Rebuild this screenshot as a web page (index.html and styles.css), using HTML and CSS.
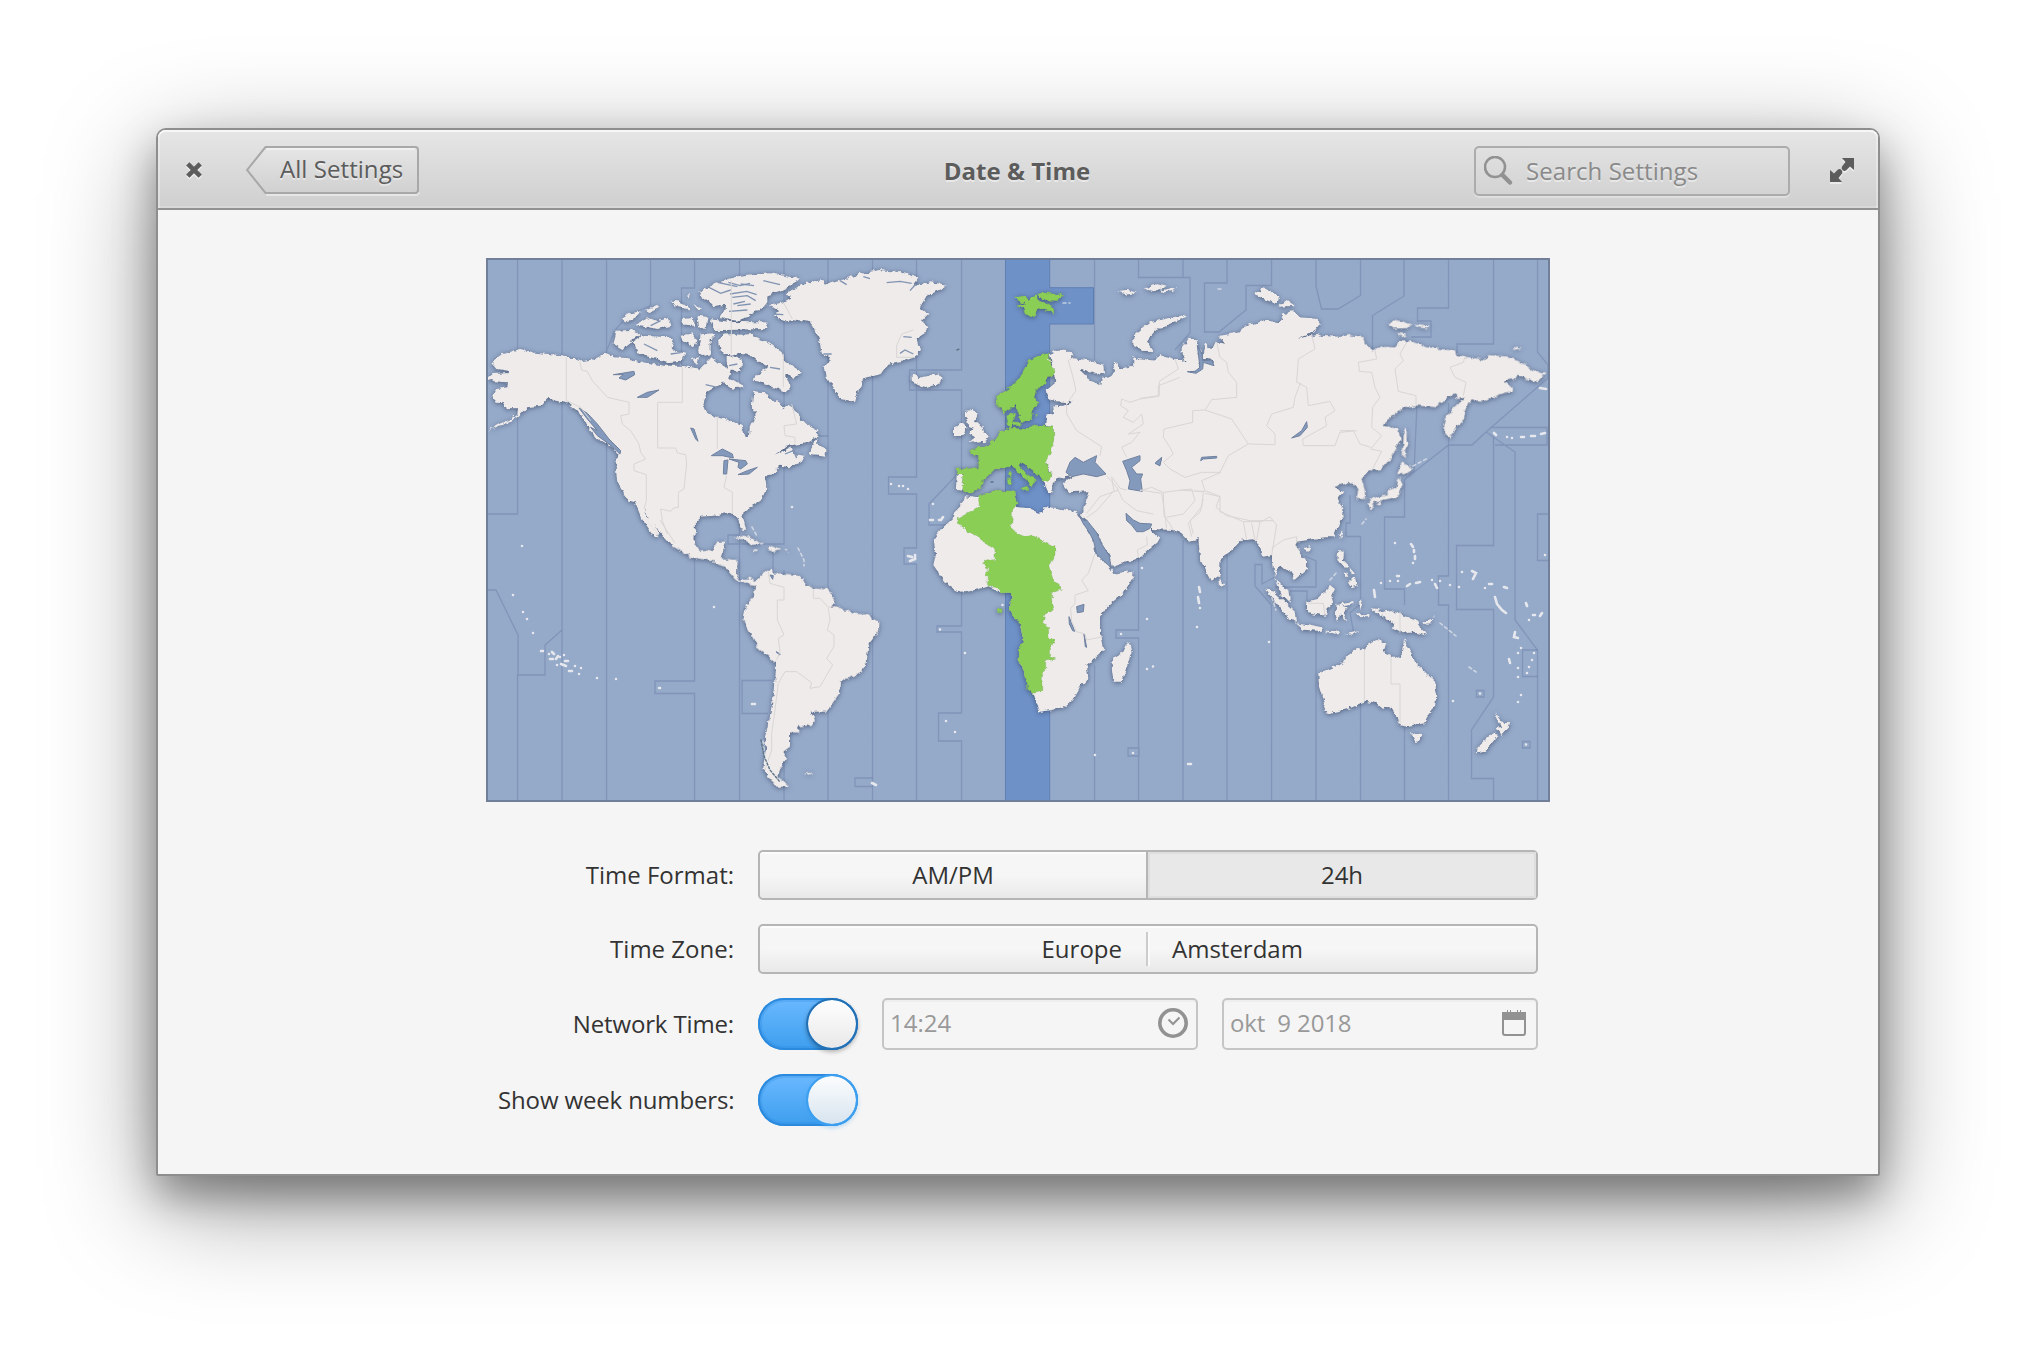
FILE: index.html
```html
<!DOCTYPE html>
<html lang="en">
<head>
<meta charset="utf-8">
<title>Date &amp; Time</title>
<link rel="stylesheet" href="styles.css">
</head>
<body>
<main class="window">
  <header class="headerbar">
    <svg class="close" width="16" height="16" viewBox="0 0 16 16"><path d="M1.800 1.800 14.200 14.200M14.200 1.800 1.800 14.200"/></svg>
    <div class="back">
      <svg class="back-shape" width="174" height="50" viewBox="0 0 174 50">
        <defs><linearGradient id="backFill" x1="0" y1="0" x2="0" y2="1"><stop offset="0" stop-color="#e6e6e6"/><stop offset="1" stop-color="#d0d0d0"/></linearGradient></defs>
        <path d="M20 49H169Q173 49 173 46" fill="none" stroke="#e6e6e6" stroke-width="2"/>
        <path d="M19.500 1H169Q172 1 172 4V44Q172 47 169 47H19.500L1 24Z" fill="url(#backFill)" stroke="#a8a8a8" stroke-width="2"/>
        <path d="M21 3H169" stroke="#f0f0f0" stroke-width="2"/>
      </svg>
      <span>All Settings</span>
    </div>
    <h1>Date &amp; Time</h1>
    <div class="search">
      <svg width="30" height="30" viewBox="0 0 30 30"><circle cx="11" cy="11" r="10"/><path class="handle" d="M18.500 19 26 26.500"/></svg>
      <span>Search Settings</span>
    </div>
    <svg class="expand" width="24" height="24" viewBox="0 0 24 24"><path d="M12 0H24V12L20 8.500 16 12.500Q14 13.500 12.500 12 11 10.500 12 8.500L15.500 4ZM0 12 4 15.500 8 11.500Q10 10.500 11.500 12 13 13.500 12 15.500L8.500 20 12 24H0Z"/></svg>
  </header>

  <section class="content">
    <svg class="map" width="1064" height="544" viewBox="486 258 1064 544">
      <defs>
        <filter id="coast" x="486" y="258" width="1064" height="544" filterUnits="userSpaceOnUse" color-interpolation-filters="sRGB">
          <feTurbulence type="fractalNoise" baseFrequency=".17" numOctaves="3" seed="4" result="noise"/>
          <feDisplacementMap in="SourceGraphic" in2="noise" scale="5.5" xChannelSelector="R" yChannelSelector="G" result="land"/>
          <feDropShadow in="land" dx="0" dy="1" stdDeviation="2.6" flood-color="#33415e" flood-opacity=".7"/>
        </filter>
      </defs>
      <rect x="486" y="258" width="1064" height="544" fill="#95a9c9"/>
      <path class="zone" d="M1005.500 258H1049.700V287.700H1093.500V324H1049.700V520L1049.700 802H1005.500Z"/>

      <g class="lines">
        <path d="M517.500 258V514H486M517.500 675V802M562 258V802M606.500 258V802M650.500 258V306Q626 314 614 332L607 350M694.500 258V288H681.500V369M739.500 258V802M784 258V544H728V535H740M784 570V802M828 258V802M872.500 258V802M916.500 258V477H888.500V494H916.500V548H904V564H916.500V802M961.500 258V370H909.500V390H961.500V470L929 504V525H961.500V626H937V632H961.500V713H938.500V741H961.500V802"/>
        <path d="M1094.500 258V360M1138.500 258V277.500H1190V333L1175 350M1183 258V277.500M1227 258V283H1204.500V332H1219L1246 310V285.500H1271.500V258M1316 258V286L1321.500 309H1338L1360.500 295.500V258M1404 258V296L1372.500 315.500V350M1448.500 258V308H1417.500V321H1431V337H1411M1493.500 258V344H1457V356M1537.500 258V352L1548 365V378L1486 432 1472 445H1448.500V403M1486 432 1515 452V620L1537.500 650V802M1490 427.500H1547V445H1495"/>
        <path d="M1417 404 1414 471 1404.500 480V517H1384.500V589H1404.500V605M1448.500 445 1404 480M1448.500 445V576H1438.500V605H1448.500V802M1493.500 437V545.500H1456.500V609.500H1493.500V697L1471.500 730V778.500H1493.500V802M1550 514H1537.500V560.500H1550M1537.500 650H1522.500V676.500H1537.500M1094.500 665V802M1138.500 520V630H1116V638H1138.500V802M1183 540V802M1227 535V802M1271.500 605 1255 586V564.500H1262V584L1275 577M1271.500 605V802M1316 626V802M1360.500 536V604L1350 613 1354 634M1360.500 700V802M1404.500 725V802M1346 536.500V523H1350V495M1346 536.500H1360.500M1305 556 1316 561V587H1275M1290 591H1307V611M1476.500 690.500H1484V697H1476.500ZM1522.500 741.500H1530V748H1522.500ZM1128 748H1139V756H1128Z"/>
        <path d="M694.500 520V681H655V693.500H694.500V802M772 680.500H742V713.500H768M872.500 778H855V786.500H872.500M828 436H815M486 590H496L518 635V675H545V645L562 630M773 552V570"/>
      </g>

      <g filter="url(#coast)">
        <g class="land">
          <!-- North America, west -->
          <g transform="translate(484 254) scale(.33333)">
            <path d="M12 372 26 360 75 357 72 350 40 345 22 325 55 300 110 285 150 296 235 304 290 322 330 316 365 298 390 310 430 312 480 325 540 335 595 335 650 345 665 330 682 310 700 325 735 345 730 375 700 395 668 415 658 450 665 470 690 487 740 500 768 512 770 540 790 555 800 540 800 515 830 505 850 700 830 740 780 770 775 790 785 825 770 822 755 785 725 778 690 785 650 788 632 805 630 870 560 870 500 805 480 765 490 795 524 850 512 848 470 790 452 745 430 738 400 685 395 640 400 600 385 580 340 555 310 520 285 470 255 450 215 440 190 432 170 455 130 460 100 490 60 510 10 530 50 508 85 492 100 480 102 463 65 462 60 445 35 443 25 425 40 405 70 400 72 385 30 382Z"/>
            <path d="M395 230 440 228 470 240 440 265 415 285 385 268ZM475 245 555 250 570 262 560 285 605 300 590 320 550 325 500 310 460 300 465 285 440 268ZM412 195 440 178 470 172 455 190 430 205ZM455 210 490 190 520 202 555 192 562 215 520 225ZM485 168 520 152 525 162 500 174ZM560 140 582 142 612 155 616 166 580 160ZM588 195 630 192 632 215 600 215ZM628 150 655 165 640 165ZM590 245 625 238 640 260 630 278 595 260ZM650 240 695 238 680 260 680 300 660 305 642 295ZM640 185 670 188 665 225 645 220ZM678 195 740 205 790 205 850 205 850 225 690 228ZM645 110 680 98 690 88 730 78 770 65 810 60 850 60 850 150 800 180 760 192 710 190 720 170 735 152 690 155 655 130ZM705 260 715 242 750 240 810 250 840 260 840 310 770 300 740 305 710 290ZM745 305 775 320 770 350 740 350 735 370 782 395 765 402 735 400 725 360ZM608 124 620 124 618 130ZM622 315 645 310 640 330Z"/>
          </g>
          <!-- North America, east, and Greenland -->
          <g transform="translate(730 254) scale(.33333)">
            <path d="M-5 75 40 65 120 58 215 75 180 95 150 110 110 125 90 140 60 150 40 165 65 185 20 200-20 195ZM-30 205 50 205 50 225-30 228ZM-20 245 70 240 85 260 110 265 155 295 165 320 215 355 195 375 175 360 165 365 185 400 170 415 130 400 100 385 70 380 85 360 115 340 85 320 60 300 40 300-20 300ZM-10 305 35 315 30 345-10 350ZM-20 370 30 390 10 405-20 390ZM70 415 110 418 115 430 145 445 160 465 180 450 205 485 235 515 265 530 262 550 230 568 170 575 135 605 180 580 190 600 225 605 215 625 175 640 150 635 130 660 105 665 85 695 80 740 40 765 35 785 48 825 35 820 20 785 0 778-30 770-30 500 0 508 30 510 45 552 60 545 65 510 80 480 65 460ZM235 600 260 555 268 572 290 590 285 605 265 602Z"/>
            <path d="M115 155 160 145 185 130 165 120 220 88 280 78 290 92 345 75 390 60 450 48 510 55 565 72 560 82 550 95 580 92 600 85 650 92 630 108 590 125 570 160 595 180 575 200 595 220 580 240 560 255 570 290 555 310 510 325 475 332 455 360 405 372 385 410 375 445 335 435 310 405 290 370 285 340 300 310 275 300 270 265 255 225 240 205 190 195 160 200 130 180 150 170ZM545 365 560 360 565 372 625 358 638 375 625 390 590 402 565 392 545 380ZM705 470 730 468 742 485 735 500 755 520 760 538 778 545 765 560 715 567 735 550 720 540 730 525 715 520 712 500 705 490ZM672 520 700 508 710 518 700 545 672 550Z"/>
          </g>
          <!-- Eastern Europe and the Middle East -->
          <g transform="translate(910 254) scale(.33333)">
            <path d="M420 300 440 290 480 290 495 302 485 312 530 318 580 335 582 352 560 362 515 345 510 350 530 360 530 375 570 392 575 375 605 365 615 350 608 330 625 328 630 345 665 335 700 325 745 318 780 315 820 315 820 822 550 822 510 785 530 765 540 712 475 715 455 690 490 665 450 672 425 690 428 712 415 715 400 683 425 665 405 620 430 560 430 520 405 515 410 480 432 485 430 457 460 455 485 445 440 442 415 435 410 405 440 380 432 365ZM140 662 160 662 155 710 138 708ZM675 275 700 240 740 205 800 190 800 200 740 225 710 260 728 290 700 290ZM622 112 650 108 678 116 650 122ZM700 105 740 90 770 98 730 112Z"/>
          </g>
          <!-- Siberia -->
          <g transform="translate(1140 254) scale(.33333)">
            <path d="M-20 310 45 320 60 300 105 315 125 325 140 325 125 300 125 285 145 255 170 255 178 290 182 320 170 350 145 355 165 358 188 340 185 320 215 330 222 320 205 315 185 315 195 265 215 285 225 265 255 272 240 245 300 235 310 215 380 200 420 205 430 178 460 172 480 190 530 195 540 210 520 235 470 255 530 240 540 245 620 250 650 245 650 680 575 695 605 710 590 725 605 770 600 800 580 850 165 850 100 828-30 822ZM-20 245 30 205 135 182 140 190 60 220 25 245 20 270 40 290 10 290-20 275ZM340 122 370 100 395 112 415 130 410 150 370 135ZM415 158 440 138 465 155ZM20 108 48 92 55 100 40 110ZM60 110 108 100 100 110 65 116Z"/>
          </g>
          <!-- Far East and Japan -->
          <g transform="translate(1340 254) scale(.33333)">
            <path d="M-20 255 25 243 70 250 75 270 100 290 120 278 165 280 180 262 215 262 260 280 345 290 350 303 420 315 440 318 445 303 510 308 560 335 580 350 615 360 590 385 560 375 535 360 525 375 490 380 515 400 515 412 480 420 440 440 390 440 370 480 375 495 350 520 325 555 310 520 315 490 345 460 375 430 355 435 345 422 325 425 290 460 230 455 190 460 130 512 175 525 182 560 160 600 125 645 85 650 65 675 75 710 75 735 50 735 55 705 35 685 10 690-20 700ZM192 520 200 525 200 560 210 575 195 590 198 612 188 605ZM185 625 220 642 195 660 172 660ZM178 668 188 690 175 730 140 735 110 742 82 750 88 738 110 728 140 720 165 700ZM82 745 98 750 92 768ZM105 750 125 740 120 750ZM515 288 530 278 548 283ZM145 210 160 196 215 210 205 222 160 224ZM225 212 265 218 262 224 235 220ZM172 236 202 243 185 250Z"/>
          </g>
          <!-- Central and South America -->
          <g transform="translate(640 520) scale(.33333)">
            <path d="M15-10 30-5 60 45 50 45ZM40-40 165-40 163 70 180 95 215 90 230 65 258 65 250 90 245 115 290 120 288 160 300 180 325 175 345 182 350 175 385 150 400 148 400 160 430 160 480 168 490 185 520 205 565 208 585 245 570 265 600 260 635 280 680 283 718 305 718 330 685 375 680 430 660 460 600 485 598 520 560 575 512 575 525 600 515 615 475 620 475 640 450 640 450 680 430 695 442 715 420 745 415 770 445 800 410 800 380 770 370 740 378 690 375 650 390 590 405 500 408 430 355 385 310 300 318 255 342 230 345 195 315 190 290 180 255 140 200 120 155 112 100 80 85 40ZM280 55 310 46 372 72 340 75 310 58ZM385 90 390 78 422 90 400 96ZM338 90 352 92 345 97ZM435 90 447 92 440 97ZM490 762 518 758 505 767ZM302-20 318 22 308 25Z"/>
          </g>
          <!-- Africa and Arabia -->
          <g transform="translate(900 460) scale(.33333)">
            <path d="M195 108 235 115 260 98 300 95 340 92 350 130 345 140 385 145 415 158 428 155 430 138 470 145 530 153 548 185 575 230 587 280 615 305 632 325 640 342 700 332 700 350 670 400 620 440 600 470 600 520 610 570 560 615 565 655 545 675 520 720 490 745 420 755 400 700 375 640 355 600 370 540 360 495 330 450 335 400 300 395 260 380 235 388 185 398 150 380 120 345 100 315 108 280 100 240 130 200 160 180 165 155 190 130ZM550 148 570 80 600-20 870-20 880 240 840 208 765 207 755 190 745 205 780 238 715 295 635 322 628 285 605 250 590 215 562 182 552 170ZM685 545 695 575 665 665 640 665 635 620 645 590 670 575Z"/>
          </g>
          <!-- South Asia, Indonesia and Oceania -->
          <g transform="translate(1180 480) scale(.33333)">
            <path d="M-30 140 0 155 30 185 50 180 55 170 60 235 95 302 120 285 122 235 150 215 185 180 215 175 235 190 250 230 275 225 285 290 300 315 325 330 330 365 305 345 290 305 283 295 290 280 298 255 330 275 345 298 378 270 378 240 350 205 350 185 385 180 440 170 490 110 490 85 470 60 490 35 460 20 490 0 490-40-30-40ZM118 292 133 315 120 322ZM478 165 490 150 480 178ZM372 205 392 198 385 213ZM478 210 492 212 490 240 512 262 490 258 475 240ZM505 310 525 292 530 320 515 325ZM495 270 505 290 495 290ZM508 262 522 278 512 280ZM378 365 410 358 450 318 465 330 455 350 460 370 440 385 435 410 385 400ZM255 328 280 335 345 395 348 428 320 410 290 370ZM348 430 385 436 425 445 425 453 370 449ZM430 452 465 453 480 458 465 461ZM495 465 535 453 520 463ZM470 375 520 366 520 372 485 380 500 385 490 395 502 422 480 400 475 427 465 400ZM540 358 550 370 542 388ZM528 403 568 402 568 409 530 408ZM572 382 598 385 600 398 630 390 715 425 720 440 742 468 700 455 685 455 665 460 635 445 640 430 610 412 590 400ZM728 425 755 420 765 406 755 430 730 432Z"/>
            <path d="M418 580 490 550 500 530 535 500 555 512 565 490 590 480 620 490 610 515 655 537 665 520 672 475 685 505 695 520 705 545 765 605 770 640 765 680 740 710 735 730 680 738 655 730 650 710 632 680 612 690 590 670 560 663 510 685 450 700 430 690 435 670 420 620ZM693 760 725 762 710 790ZM945 697 970 728 990 730 985 745 965 765 950 745 963 740ZM940 760 955 765 915 815 888 820 890 805Z"/>
          </g>
        </g>
        <g class="green">
          <g transform="translate(910 254) scale(.33333)">
            <path d="M262 425 300 400 330 370 355 320 385 305 418 297 420 330 430 340 432 365 410 370 405 390 380 405 372 430 388 445 370 465 365 495 335 507 320 465 315 450 300 465 280 475 265 455ZM290 485 310 480 312 500 305 520 295 520ZM308 505 328 500 330 515 315 515ZM178 590 205 580 230 578 255 555 270 535 300 522 345 525 370 512 430 520 432 560 420 600 408 620 412 640 425 665 415 680 400 683 390 665 350 635 332 622 330 635 350 660 380 680 370 685 365 700 350 678 320 655 305 635 285 645 255 645 245 655 218 680 215 700 175 718 155 710 158 662 140 660 138 645 205 642 208 610 185 600ZM328 703 355 696 352 714ZM292 670 304 668 303 692 293 694ZM295 654 305 651 304 666 296 664ZM315 130 345 125 355 140 380 122 385 145 415 150 435 165 430 178 385 160 370 190 345 180 340 165 320 155 345 150ZM380 120 400 116 460 122 440 140 400 138ZM377 478 386 476 380 488Z"/>
          </g>
          <g transform="translate(900 460) scale(.33333)">
            <path d="M232 110 260 98 300 93 342 92 345 110 352 130 338 145 335 205 350 220 375 230 395 225 462 260 462 295 447 320 460 360 490 388 455 398 455 420 463 450 435 462 428 492 445 500 447 535 462 535 462 552 447 555 450 590 470 597 437 602 437 632 428 638 425 695 400 700 385 690 375 640 355 600 358 570 370 540 362 500 330 450 335 405 325 398 300 395 290 382 262 380 265 350 255 340 265 330 250 305 285 298 285 268 170 188 172 175 215 152 235 140ZM292 446H303V455H292Z"/>
          </g>
        </g>
      </g>

      <!-- Seas and lakes enclosed by land -->
      <g class="lake">
        <path transform="translate(484 254) scale(.33333)" d="M682 605 715 585 745 600 748 612 715 605ZM720 620 732 618 728 660 718 660ZM735 615 785 620 790 630 770 645 762 640 765 625ZM762 662 790 650 820 640 795 660ZM388 362 420 357 450 352 452 362 425 378 405 372 418 362ZM460 430 490 415 525 408 490 430ZM620 522 630 525 642 562 635 555ZM285 462 310 478 340 510 375 555 410 590 408 600 375 570 340 545 320 520 340 530 310 495Z"/>
        <path class="inlet" transform="translate(484 254) scale(.33333)" d="M675 100 710 118 740 108M700 85 760 98M745 130 790 125 815 140M760 155 800 150M735 172 790 168M500 215 530 200M520 290 480 270M735 335 760 330M665 392 700 400M770 90 810 95M560 300 590 296"/>
        <path class="inlet" transform="translate(730 254) scale(.33333)" d="M-5 85 30 95 60 88M0 120 50 112 80 122M10 150 45 142M100 80 150 92M120 340 150 345M470 86 510 82 545 88M330 80 350 92M400 68 420 74M540 110 558 90M545 250 520 248M510 298 525 288 550 300M280 300 305 300M130 180 160 182M165 600 190 590 200 612"/>
        <path transform="translate(910 254) scale(.33333)" d="M468 655 480 625 495 610 520 625 560 605 555 625 588 660 560 668 520 660 485 668ZM638 622 690 605 690 620 665 640 680 660 698 660 692 675 697 712 655 705 660 680 650 650ZM445 672 458 674 445 680ZM738 625 755 612 748 635Z"/>
        <path transform="translate(1140 254) scale(.33333)" d="M455 552 485 530 500 503 502 520 480 545ZM182 620 185 610 230 607 230 612 190 615ZM45 628 65 610 60 635ZM142 353 165 352 180 340 172 275 186 300 188 320 215 318 222 335 190 325 188 345 168 358Z"/>
        <path transform="translate(900 460) scale(.33333)" d="M530 440 552 433 550 455 532 458ZM678 160 700 180 720 190 755 192 750 205 730 215 710 215 695 195 680 182ZM507 470 524 514 518 512 508 492ZM552 522 560 562 556 560ZM538 165 552 182 560 180 590 218 605 252 628 288 633 322 612 304 590 282 580 240 562 208 548 188Z"/>
        <path transform="translate(640 520) scale(.33333)" d="M390 165 400 167 398 178ZM408 395 421 402 418 405Z"/>
      </g>

      <!-- Zone borders crossing land -->
      <g class="borders">
        <path transform="translate(484 254) scale(.33333)" d="M247 310V440L290 460 320 500M288 322 292 348 310 352 325 380 370 430 435 445V480L410 485 415 510 440 530 465 570 470 595 485 615 450 630 450 650 487 662V740L480 765M595 340V445H521V582H575L580 597 605 602 608 630 600 705 583 715V760L568 762 560 772 530 765 535 800 550 840M700 487V585M728 665 720 700 745 715V780M742 80V300"/>
        <path transform="translate(730 254) scale(.33333)" d="M160 145 187 195M555 310H500V275L515 240 550 228M185 450 200 510 162 515 165 545 195 550 195 568M160 300V400"/>
        <path transform="translate(910 254) scale(.33333)" d="M410 315 430 325M490 310 475 320 488 365 498 410 470 450 470 480 500 530 575 578 570 605M810 370 745 395V427L690 435 660 445 635 435 632 455 655 470 640 490 670 505 695 480 700 510 655 540 690 535 665 565 635 580 650 610M590 665 620 700 640 740 680 770 730 780M605 670 612 710 560 770 530 790"/>
        <path transform="translate(1140 254) scale(.33333)" d="M105 315 115 345 58 382V425L0 433M230 265 240 310 260 325 265 355 290 385 290 430 215 437 195 468 158 470 158 505 72 525 70 550 90 580 100 600 70 625 90 645 135 670 185 655 243 655 185 680 195 710 240 727 228 760 260 785 330 800 400 800M195 468 275 495 325 570 265 605 240 655M325 570 405 572 405 540 380 515 395 480 460 460 465 430 480 390 500 400 505 455 570 442 585 470 555 490 560 515 488 555 490 575 585 575 600 535 650 530M515 240 525 285 475 315 470 385 485 390M0 710 35 700 70 715 155 705 165 740 130 780 80 790M165 712H195M70 715 72 785 90 810 100 830M190 735 180 775 150 800 160 840"/>
        <path transform="translate(1340 254) scale(.33333)" d="M105 290 110 315 55 325 58 352 95 355 105 400 120 430 98 460 95 520 125 545 92 585 125 592 95 650M200 265 180 300 190 320 165 345 175 412 228 425V455M375 308 370 325 330 340 345 370 378 385 370 425M0 530 40 530 60 570 92 580"/>
        <path transform="translate(640 520) scale(.33333)" d="M60 0 105 70M385 155 390 190 432 202V240H412V300L432 345 415 355 420 395 410 420M585 260 565 262 540 235 520 235 520 208M565 265 570 300 562 330 582 345V380L560 415 578 435 540 500 510 505 515 488 470 455 435 455 415 490 405 570 395 640 395 690 375 750"/>
        <path transform="translate(900 460) scale(.33333)" d="M585 280 565 340 545 360 565 392 525 405V430L512 445 515 485 530 515 555 522 560 540 608 530M635 50 660 85 680 90M655 90 600 110 560 160M720 90 785 100 795 165 800 205M740 230 742 255 712 270 715 290"/>
        <path transform="translate(1180 480) scale(.33333)" d="M0 30 70 35 65 80 25 130 35 170M75 40 120 50 120 95 190 125H245L270 110 290 135 275 225M190 125 200 180M215 130 225 180M240 125 230 180M275 205 310 180 350 170 350 190M385 370 430 370 435 405M553 513V663M633 530V612H660V730M660 395V458"/>
      </g>

      <!-- Small islands -->
      <g class="dots">
        <path d="M891 484h0M899 486h0M903 486h0M908 489h0M792 507h0M933 504h0M930 520h3M939 520h2l2-3M908 556l4 1M910 561l5-2v-4M940 629.500h0M965 653h0M946 721h0M955 732h0M1002.500 605h0M1142 568h0M1147 619h0M1121 634h0M1147 669h0M1153 666.500h0M1095 755h0M1133 753h0M1188 764h3M1199 587l1 5M1198 597l1 6M1200 608h0M1197 627h0M1269 642h0M714 607h0M752 704h3M660 688h0M872 783l4 2"/>
        <path d="M1395 543h0M1411 544l2 3M1414 550v2M1415 556v3M1413 563h0M1381 583h0M1390 581h0M1397 576h2M1398 581h0M1407 586l3-2M1416 583l4-1M1374 590l1 7M1432 580h0M1435 584l2 4M1440 581h0M1450 585h0M1459 587h0M1462 572h0M1472 571l4 2-3 6M1485 588h0M1489 584h3M1504 587l3 1M1495 597l2 7 5 6 4 3M1526 603l1 3M1529 620h0M1533 615h2M1540 616l2-3M1515 632l-1 5 4 1M1521 648h0M1518 653h0M1509 659l1 4M1518 668h0M1518 677h0M1534 653h0M1532 660h0M1529 667h0M1527 673h0M1521 695h0M1518 702h0M1480 693.500h0M1526 744.500h0M1453 701h0M1545 555h0"/>
        <path d="M1494 433l2 2M1507 437h0M1512 438h0M1521 437h3M1531 436l4 0M1541 434l4-1M1540 388l6 1M522 546h0M513 595h0M523 612h0M527 619h0M533 633h0M541 651h2M549 654h0M552 652l2 2M560 657h0M556 659l2-3M565 661h3M550 659h3M561 664l5 2M575 666h0M569 671h3M581 668h0M557 665h0M564 655h0M579 674h0M597 678h0M616 679h0M659 688h0"/>
        <path class="faint" d="M1440 623l16 13M1469 667l7 5M1330 580 1337 572M1413 466 1428 458M1362 524 1366 519M1270 592l6 18M798 548l6 12 0 6M763 741l2 14 5 15 13 12M752 527l5 9M1063 303h7M1218 289h3"/>
        <path class="edge" d="M957 350l2-1M991 482h3M1042 402h0M761 740l3 16 6 14 10 12"/>
      </g>
      <rect class="frame" x="487" y="259" width="1062" height="542"/>
    </svg>

    <div class="form">
      <span class="label">Time Format:</span>
      <div class="box segmented"><span class="seg">AM/PM</span><span class="seg active">24h</span></div>

      <span class="label">Time Zone:</span>
      <div class="box zonebox"><span class="area">Europe</span><i class="divider"></i><span class="city">Amsterdam</span></div>

      <span class="label tight">Network Time:</span>
      <div class="row">
        <span class="switch"><i class="knob"></i></span>
        <div class="entry"><span>14:24</span>
          <svg width="30" height="31" viewBox="0 0 30 31"><circle cx="15" cy="15" r="13.200" stroke-width="3.600"/><path d="M10.500 11.500 15 16 21.500 9.500" stroke-width="2"/></svg>
        </div>
        <div class="entry"><span class="tight">okt&nbsp; 9 2018</span>
          <svg class="cal" width="24" height="28" viewBox="0 0 24 28"><path d="M1 4V24Q1 26 3 26H21Q23 26 23 24V4Z" stroke-width="2"/><path class="solid" d="M0 11V5Q0 3 2 3H5V1H6V5H8V1H9V3H15V1H16V5H18V1H19V3H22Q24 3 24 5V11Z"/></svg>
        </div>
      </div>

      <span class="label tight">Show week numbers:</span>
      <div class="row"><span class="switch focus"><i class="knob"></i></span></div>
    </div>
  </section>
</main>
</body>
</html>
```
FILE: styles.css
```css
* { box-sizing: border-box; }

body {
  margin: 0;
  padding: 128px 156px;
  height: 1360px;
  overflow: hidden;
  background: #fff;
  color: #333;
  font: 24px/34px "Open Sans", "Noto Sans", sans-serif;
}

.window {
  height: 1048px;
  border: 2px solid #8e8e8e;
  border-radius: 10px 10px 2px 2px;
  background: #f5f5f5;
  box-shadow: 0 28px 110px rgba(0, 0, 0, .4), 0 20px 40px rgba(0, 0, 0, .34);
}

.headerbar {
  display: flex;
  align-items: flex-start;
  height: 80px;
  padding: 16px 24px 0 28px;
  border-bottom: 2px solid #929292;
  border-radius: 8px 8px 0 0;
  background: linear-gradient(#e6e6e6, #cfcfcf);
  box-shadow: inset 0 2px #f7f7f7, inset 2px 0 rgba(255, 255, 255, .3), inset -2px 0 rgba(255, 255, 255, .3), inset 0 -2px rgba(255, 255, 255, .2);
  color: #5c5c5c;
  text-shadow: 0 2px rgba(255, 255, 255, .45);
}

.close {
  margin: 16px 44px 0 0;
  fill: none;
  stroke: #5c5c5c;
  stroke-width: 4.6;
  filter: drop-shadow(0 2px 0 rgba(255, 255, 255, .5));
}

.back {
  display: grid;
  width: 174px;
}

.back > * { grid-area: 1 / 1; }

.back span {
  padding: 6px 0 0 34px;
  letter-spacing: .06px;
  white-space: nowrap;
}

h1 {
  flex: 1;
  margin: 8px 0 0;
  padding-left: 140px;
  font-size: 24px;
  line-height: 34px;
  text-align: center;
}

.search {
  display: flex;
  width: 316px;
  height: 50px;
  padding: 6px 8px;
  border: 2px solid #acacac;
  border-radius: 5px;
  box-shadow: 0 2px rgba(255, 255, 255, .3);
  color: #8a8a8a;
  letter-spacing: .06px;
}

.search svg {
  margin: 2px 12px 0 0;
  fill: none;
  stroke: #929292;
  stroke-width: 2.6;
}

.search .handle { stroke-width: 4.5; stroke-linecap: round; }

.expand {
  margin: 12px 0 0 40px;
  fill: #5c5c5c;
  filter: drop-shadow(0 2px 0 rgba(255, 255, 255, .5));
}

.content {
  display: flex;
  flex-direction: column;
  align-items: center;
  gap: 48px;
  padding-top: 48px;
}

.map { display: block; }

.zone {
  fill: #6e91c8;
  stroke: #5f7fb3;
  stroke-width: 1;
}

.lines {
  fill: none;
  stroke: #4c5f91;
  stroke-opacity: .27;
  stroke-width: 1.3;
}

.land { fill: #efebea; }

.green {
  fill: #8bce56;
  stroke: #7da866;
  stroke-width: 1;
}

.lake {
  fill: #839abd;
  stroke: #6e809e;
  stroke-width: 3;
}

.lake .inlet {
  fill: none;
  stroke: #8093b2;
  stroke-width: 4;
}

.borders {
  fill: none;
  stroke: #d8d5d5;
  stroke-width: 3;
  stroke-linejoin: round;
}

.dots {
  fill: none;
  stroke: #e7e8ed;
  stroke-width: 2.6;
  stroke-linecap: round;
}

.dots .faint { stroke-width: 1.6; stroke-dasharray: 3 3; opacity: .7; }

.dots .edge { stroke: #5b7385; stroke-width: 1.4; stroke-dasharray: 2 2; }

.frame {
  fill: none;
  stroke: #717f99;
  stroke-width: 2;
}

.form {
  display: grid;
  grid-template-columns: 236px 780px;
  column-gap: 24px;
  row-gap: 24px;
  align-items: center;
}

.label {
  text-align: right;
  white-space: nowrap;
}

.tight { letter-spacing: -.14px; }

.box {
  display: flex;
  height: 50px;
  border: 2px solid #b5b5b5;
  border-radius: 5px;
  background: linear-gradient(#f6f6f6 50%, #e9e9e9);
  box-shadow: inset 0 2px #fcfcfc;
}

.seg {
  width: 386px;
  padding-top: 6px;
  text-align: center;
}

.seg.active {
  flex: 1;
  border-left: 2px solid #b5b5b5;
  background: #e8e8e8;
  box-shadow: inset 0 0 0 2px #dedede;
}

.zonebox { align-items: center; }

.area {
  width: 386px;
  padding-right: 24px;
  text-align: right;
}

.divider {
  width: 2px;
  height: 34px;
  background: #ccc;
  box-shadow: 2px 0 #fafafa;
}

.city { padding-left: 24px; }

.row {
  display: flex;
  gap: 24px;
}

.switch {
  display: flex;
  justify-content: flex-end;
  width: 100px;
  height: 52px;
  border-radius: 26px;
  background: linear-gradient(#6bb9ff, #3d9eee);
  box-shadow: inset 0 0 0 2px #2b8ade, inset 0 0 0 4px rgba(40, 130, 220, .25);
}

.knob {
  width: 52px;
  height: 52px;
  border: 2px solid #2370b5;
  border-radius: 50%;
  background: linear-gradient(#fff, #e8e8e8) padding-box;
  box-shadow: 0 2px 4px rgba(0, 0, 0, .28);
}

.focus .knob {
  border-color: #3c9ff0;
  background: linear-gradient(#fcfdfe, #d7e4ef) padding-box;
  box-shadow: 0 2px 4px rgba(60, 160, 240, .3);
}

.entry {
  display: flex;
  align-items: center;
  justify-content: space-between;
  width: 316px;
  height: 52px;
  padding: 0 8px 2px 6px;
  border: 2px solid #c5c5c5;
  border-radius: 5px;
  box-shadow: inset 0 2px #eee;
  color: #999;
}

.entry svg {
  fill: none;
  stroke: #929292;
}

.entry .cal { margin-right: 2px; }

.entry .solid {
  fill: #929292;
  stroke: none;
}
```
